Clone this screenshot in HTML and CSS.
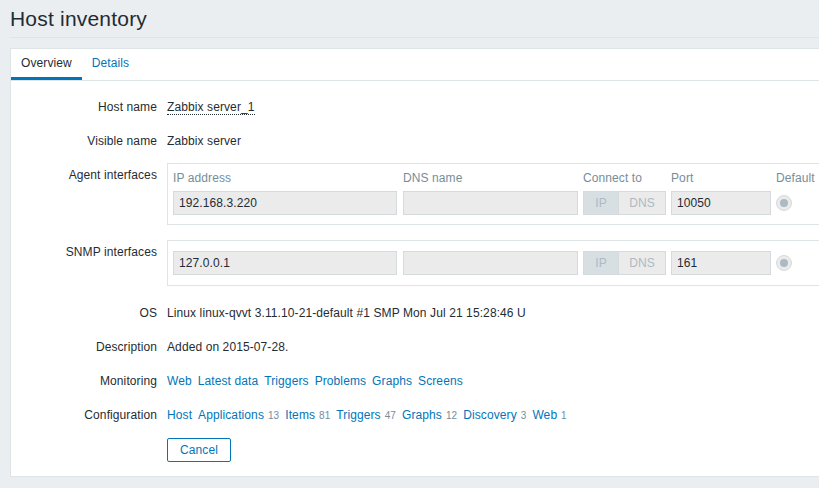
FILE: index.html
```html
<!DOCTYPE html>
<html>
<head>
<meta charset="utf-8">
<title>Host inventory</title>
<link rel="stylesheet" href="styles.css">
</head>
<body>
<header class="page-header">
  <h1>Host inventory</h1>
</header>
<main class="panel">
  <ul class="tabs">
    <li class="tab active">Overview</li>
    <li class="tab"><a href="#">Details</a></li>
  </ul>
  <div class="form">
    <div class="lbl">Host name</div>
    <div class="val"><span class="hint">Zabbix server_1</span></div>

    <div class="lbl">Visible name</div>
    <div class="val">Zabbix server</div>

    <div class="lbl">Agent interfaces</div>
    <div class="val">
      <div class="ifbox agent">
        <div class="ifrow head">
          <div class="c-ip">IP address</div>
          <div class="c-dns">DNS name</div>
          <div class="c-con">Connect to</div>
          <div class="c-port">Port</div>
          <div class="c-def">Default</div>
        </div>
        <div class="ifrow inputs">
          <div class="c-ip field">192.168.3.220</div>
          <div class="c-dns field"></div>
          <div class="c-con seg"><span class="seg-ip">IP</span><span class="seg-dns">DNS</span></div>
          <div class="c-port field">10050</div>
          <div class="c-def"><span class="radio"></span></div>
        </div>
      </div>
    </div>

    <div class="lbl">SNMP interfaces</div>
    <div class="val">
      <div class="ifbox snmp">
        <div class="ifrow inputs">
          <div class="c-ip field">127.0.0.1</div>
          <div class="c-dns field"></div>
          <div class="c-con seg"><span class="seg-ip">IP</span><span class="seg-dns">DNS</span></div>
          <div class="c-port field">161</div>
          <div class="c-def"><span class="radio"></span></div>
        </div>
      </div>
    </div>

    <div class="lbl">OS</div>
    <div class="val">Linux linux-qvvt 3.11.10-21-default #1 SMP Mon Jul 21 15:28:46 U</div>

    <div class="lbl">Description</div>
    <div class="val">Added on 2015-07-28.</div>

    <div class="lbl">Monitoring</div>
    <div class="val links">
      <a href="#">Web</a>
      <a href="#">Latest data</a>
      <a href="#">Triggers</a>
      <a href="#">Problems</a>
      <a href="#">Graphs</a>
      <a href="#">Screens</a>
    </div>

    <div class="lbl">Configuration</div>
    <div class="val links">
      <a href="#">Host</a>
      <span><a href="#">Applications</a> <span class="cnt">13</span></span>
      <span><a href="#">Items</a> <span class="cnt">81</span></span>
      <span><a href="#">Triggers</a> <span class="cnt">47</span></span>
      <span><a href="#">Graphs</a> <span class="cnt">12</span></span>
      <span><a href="#">Discovery</a> <span class="cnt">3</span></span>
      <span><a href="#">Web</a> <span class="cnt">1</span></span>
    </div>

    <div class="lbl"></div>
    <div class="val"><button class="btn" type="button">Cancel</button></div>
  </div>
</main>
</body>
</html>
```

FILE: styles.css
```css
html, body {
  margin: 0;
  padding: 0;
}
body {
  background: #ebeef0;
  font-family: "Liberation Sans", Arial, sans-serif;
  font-size: 12px;
  letter-spacing: 0.1px;
  color: #1f2c33;
  overflow: hidden;
  width: 819px;
  height: 488px;
}
a {
  color: #0275b8;
  text-decoration: none;
}
.page-header {
  margin-left: 10px;
  padding: 7px 0 6px;
  border-bottom: 1px solid #dfe4e7;
}
.page-header h1 {
  margin: 0;
  font-size: 21px;
  line-height: 24px;
  font-weight: normal;
  letter-spacing: 0.2px;
  color: #1f2c33;
}
.panel {
  margin: 10px -40px 0 10px;
  background: #fff;
  border: 1px solid #dfe4e7;
}
.tabs {
  list-style: none;
  margin: 0;
  padding: 0;
  display: flex;
  border-bottom: 1px solid #dfe4e7;
}
.tab {
  padding: 1px 10px 0;
  line-height: 27px;
  border-bottom: 3px solid transparent;
}
.tab.active {
  border-bottom-color: #0275b8;
  color: #1f2c33;
}
.form {
  display: grid;
  grid-template-columns: 146px 1fr;
  column-gap: 10px;
  row-gap: 10px;
  padding: 14px 0 14px;
}
.lbl {
  text-align: right;
  line-height: 24px;
  white-space: nowrap;
}
.val {
  line-height: 24px;
  white-space: nowrap;
}
.hint {
  border-bottom: 1px dotted #1f2c33;
}
.ifbox {
  border: 1px solid #dfe4e7;
  border-right: 0;
  margin-bottom: 5px;
  padding: 0 5px;
}
.ifbox.agent {
  padding-top: 4px;
  padding-bottom: 9px;
}
.ifbox.snmp {
  padding-top: 10px;
  padding-bottom: 10px;
}
.ifrow {
  display: flex;
  align-items: center;
}
.ifrow.head {
  line-height: 20px;
  height: 20px;
  color: #768d99;
}
.ifrow.inputs {
  margin-top: 3px;
}
.snmp .ifrow.inputs {
  margin-top: 0;
}
.c-ip { width: 224px; margin-right: 6px; flex: none; }
.c-dns { width: 175px; margin-right: 5px; flex: none; }
.c-con { width: 83px; margin-right: 5px; flex: none; }
.c-port { width: 100px; margin-right: 5px; flex: none; }
.c-def { flex: none; }
.field {
  box-sizing: border-box;
  height: 24px;
  line-height: 22px;
  padding: 0 5px;
  background: #ebebeb;
  border: 1px solid #d5dadd;
  color: #1f2c33;
}
.seg {
  box-sizing: border-box;
  height: 24px;
  display: flex;
  border: 1px solid #d5dadd;
  color: #acbbc2;
  line-height: 22px;
}
.seg-ip {
  width: 34px;
  text-align: center;
  background: #d7dfe3;
  border-right: 1px solid #d5dadd;
}
.seg-dns {
  flex: 1;
  text-align: center;
  background: #ebebeb;
}
.radio {
  display: block;
  box-sizing: border-box;
  width: 16px;
  height: 16px;
  border-radius: 50%;
  border: 1px solid #d5dadd;
  background: #ebebeb;
  position: relative;
}
.radio::after {
  content: "";
  position: absolute;
  left: 3px;
  top: 3px;
  width: 8px;
  height: 8px;
  border-radius: 50%;
  background: #acbbc2;
}
.links {
  display: flex;
  gap: 6px;
}
.cnt {
  color: #768d99;
  font-size: 10px;
  margin-left: 0.5px;
}
.btn {
  box-sizing: border-box;
  height: 24px;
  padding: 0 12px;
  background: #fff;
  border: 1px solid #0275b8;
  border-radius: 2px;
  color: #0275b8;
  font-family: "Liberation Sans", Arial, sans-serif;
  font-size: 12px;
  letter-spacing: 0.1px;
  line-height: 22px;
  vertical-align: top;
  display: block;
}
```
